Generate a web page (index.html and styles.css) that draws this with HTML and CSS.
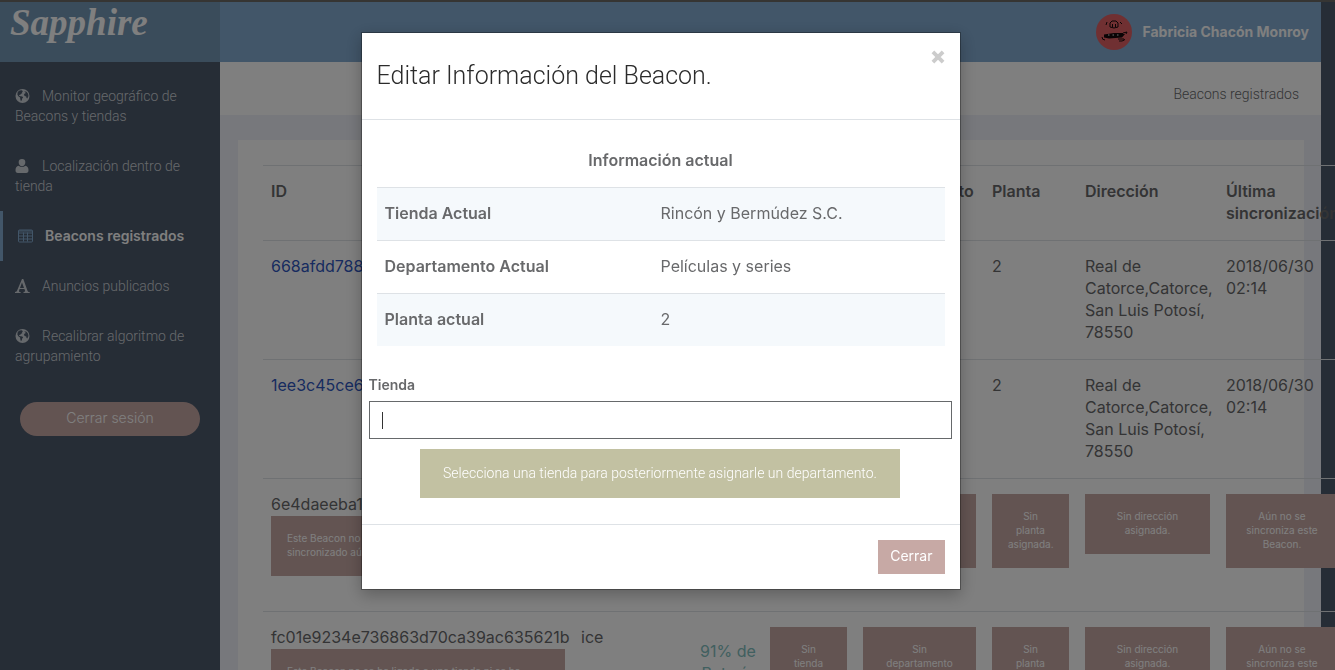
FILE: index.html
```html
<!DOCTYPE html>
<html lang="es">
<head>
<meta charset="utf-8">
<meta name="viewport" content="width=device-width, initial-scale=1">
<title>Sapphire - Beacons registrados</title>
<link rel="stylesheet" href="styles.css">
</head>
<body>
<svg class="sprite" aria-hidden="true">
  <symbol id="globe" viewBox="0 0 14 14"><circle cx="7" cy="7" r="7" fill="currentColor"/><path class="land" d="M2.200 3 4 1.600 6.200 1.300 7.500 2.200 6.300 3.300 7 4 5.300 5 4.600 6 3.800 5.700 3.500 6.800 5 7.200 6.800 7.400 7.600 8.600 6.700 9.600 6.300 11.300 5.400 12.200 4.800 10.200 4.600 8.400 2.800 7.200 1.900 5.400zM8.800 2.200 11 2.700 12.600 4.700 13 7 11.800 9.600 11 9 10.700 7.400 9.200 7 8.400 5.700 9.200 4.600 10.500 4 9.600 3.200z"/></symbol>
  <symbol id="user" viewBox="0 0 14 14"><path fill="currentColor" d="M6.500 0a3.300 3.300 0 0 1 3.300 3.500c0 2-1.400 3.700-3.300 3.700s-3.300-1.700-3.300-3.700A3.300 3.300 0 0 1 6.500 0zM3.200 6.700a4.600 4.600 0 0 0 6.600 0C12 7 13 8.800 13 11.300c0 1.700-.8 2.700-2.300 2.700H2.300C.8 14 0 13 0 11.300c0-2.500 1-4.300 3.200-4.600z"/></symbol>
  <symbol id="grid" viewBox="0 0 15 13"><path fill="none" stroke="currentColor" d="M1.500.5h12a1 1 0 0 1 1 1v10a1 1 0 0 1-1 1h-12a1 1 0 0 1-1-1v-10a1 1 0 0 1 1-1zM.5 1.500h14M.5 3.500h14M.5 6.500h14M.5 9.500h14M5.500 3v9M9.500 3v9"/></symbol>
  <symbol id="type" viewBox="0 0 15 14"><path fill="currentColor" fill-rule="evenodd" d="M7 0h1.300l4.200 11.700c.3.900.8 1.200 2.200 1.300v1H8.500v-1c1.600-.1 1.800-.5 1.500-1.400L9.400 10H4.600l-.5 1.400c-.3 1 .1 1.500 1.500 1.600v1H0v-1c1.200-.1 1.700-.5 2.100-1.500zM7 3.400 5 8.900h4z"/></symbol>
</svg>
<div class="page">
  <aside class="sidebar">
    <a class="logo" href="#">Sapphire</a>
    <nav class="nav">
      <a href="#"><svg class="icon"><use href="#globe"/></svg>Monitor geográfico de Beacons y tiendas</a>
      <a href="#"><svg class="icon"><use href="#user"/></svg>Localización dentro de tienda</a>
      <a class="active" href="#"><svg class="icon"><use href="#grid"/></svg>Beacons registrados</a>
      <a href="#"><svg class="icon"><use href="#type"/></svg>Anuncios publicados</a>
      <a href="#"><svg class="icon"><use href="#globe"/></svg>Recalibrar algoritmo de agrupamiento</a>
    </nav>
    <button class="logout" type="button">Cerrar sesión</button>
  </aside>
  <div class="main">
    <header class="topbar">
      <svg class="avatar" viewBox="0 0 36 36" aria-hidden="true"><circle cx="18" cy="18" r="18" fill="#e06065"/><g fill="none" stroke="#15080a"><path d="M14 13V9l2-2h4l2 2v4q-4 2-8 0M16.500 10v3M19.500 10v3M11 8l-1 3M24 8l2 2"/><path d="M6 23q0 3 3 3M22 25h6q2 1-2 2h-3M27 19l4-1-1 2"/></g><path d="M8 20.500 18 19h9v1h2l-3 3.500-13 1-5-1z" fill="#15080a"/><path d="M12 21h1.500m3 0H18m3 0h1.500" stroke="#ddd"/></svg>
      <span>Fabricia Chacón Monroy</span>
    </header>
    <div class="crumbs">Beacons registrados</div>
    <section class="card">
      <table class="beacons">
        <colgroup><col class="w-id"><col class="w-name"><col class="w-bat"><col class="w-small"><col class="w-dep"><col class="w-small"><col class="w-dir"><col class="w-sync"></colgroup>
        <thead><tr><th>ID</th><th>Nombre</th><th>Batería</th><th>Tienda</th><th>Departamento</th><th>Planta</th><th>Dirección</th><th>Última sincronización</th></tr></thead>
        <tbody>
          <tr><td><a href="#">668afdd788</a></td><td>mint</td><td></td><td></td><td></td><td>2</td><td>Real de Catorce,Catorce, San Luis Potosí, 78550</td><td>2018/06/30 02:14</td></tr>
          <tr><td><a href="#">1ee3c45ce6</a></td><td>mint</td><td></td><td></td><td></td><td>2</td><td>Real de Catorce,Catorce, San Luis Potosí, 78550</td><td>2018/06/30 02:14</td></tr>
          <tr><td>6e4daeeba1f<div class="note left">Este Beacon no se ha ligado a una tienda ni se ha sincronizado aún.</div></td><td></td><td></td><td></td><td><div class="note">Sin departamento asignado.</div></td><td><div class="note">Sin planta asignada.</div></td><td><div class="note">Sin dirección asignada.</div></td><td><div class="note">Aún no se sincroniza este Beacon.</div></td></tr>
          <tr><td>fc01e9234e736863d70ca39ac635621b<div class="note left">Este Beacon no se ha ligado a una tienda ni se ha sincronizado aún.</div></td><td>ice</td><td class="level"><div class="battery">91% de Batería</div></td><td><div class="note">Sin tienda asignada.</div></td><td><div class="note">Sin departamento asignado.</div></td><td><div class="note">Sin planta asignada.</div></td><td><div class="note">Sin dirección asignada.</div></td><td><div class="note">Aún no se sincroniza este Beacon.</div></td></tr>
        </tbody>
      </table>
    </section>
  </div>
</div>
<div class="backdrop">
  <div class="modal" role="dialog" aria-modal="true" aria-labelledby="title">
    <div class="modal-head">
      <h4 id="title">Editar Información del Beacon.</h4>
      <button class="close" type="button" aria-label="Cerrar ventana"><svg viewBox="0 0 11 11"><path d="m1.500 1.500 8 8M9.500 1.500l-8 8" stroke="currentColor" stroke-width="3"/></svg></button>
    </div>
    <div class="modal-body">
      <table class="info">
        <colgroup><col class="w-key"><col></colgroup>
        <thead><tr><th colspan="2">Información actual</th></tr></thead>
        <tbody>
          <tr><th>Tienda Actual</th><td>Rincón y Bermúdez S.C.</td></tr>
          <tr><th>Departamento Actual</th><td>Películas y series</td></tr>
          <tr><th>Planta actual</th><td>2</td></tr>
        </tbody>
      </table>
      <div class="field">
        <label for="store">Tienda</label>
        <div class="entry"><input id="store" type="text" autocomplete="off"></div>
      </div>
      <p class="hint">Selecciona una tienda para posteriormente asignarle un departamento.</p>
    </div>
    <div class="modal-foot"><button class="dismiss" type="button">Cerrar</button></div>
  </div>
</div>
</body>
</html>
```
FILE: styles.css
```css
* { box-sizing: border-box; }
body {
  margin: 0;
  height: 100vh;
  overflow: hidden;
  border-top: 2px solid #6c6a66;
  background: #4c5a6c;
  color: #68696b;
  font: 16px/22px Inter, sans-serif;
}
button, input { font: inherit; }
a { text-decoration: none; }
.sprite { position: absolute; width: 0; height: 0; }
.land { fill: #4c5a6c; }

.page { display: flex; margin-right: 14px; height: 100%; }
.sidebar { flex: 0 0 220px; background: #4c5a6c; font: 300 14px/20px Roboto, sans-serif; }
.logo {
  display: block;
  height: 60px;
  padding-left: 10px;
  background: #7498b6;
  color: #fff;
  font: italic bold 37px/42px "Liberation Serif", serif;
}
.nav { padding-top: 9px; }
.nav a { display: block; padding: 15px; color: #cdd2d8; }
.nav a.active {
  border-left: 3px solid #84acd2;
  color: #fff;
  font-family: Inter, sans-serif;
  font-weight: 600;
}
.icon { width: 15px; height: 14px; margin-right: 12px; vertical-align: -2px; }
.active .icon { color: #84acd2; }
.logout {
  display: block;
  width: 180px;
  height: 34px;
  margin: 21px 20px;
  padding: 0 0 2px;
  border: 0;
  border-radius: 17px;
  background: #c7a9a5;
  color: #fff;
  font: 300 14px/20px Inter, sans-serif;
}
.main { flex: 1; min-width: 0; background: #eff1f8; }
.topbar {
  display: flex;
  align-items: center;
  justify-content: flex-end;
  gap: 10px;
  height: 60px;
  padding-right: 12px;
  background: #84acd2;
  color: #fff;
  font: bold 14px/20px Inter, sans-serif;
}
.avatar { width: 36px; height: 36px; }
.crumbs {
  height: 53px;
  padding: 22px 22px 0;
  background: #fff;
  text-align: right;
  font: 300 14px/20px Roboto, sans-serif;
}
.card { margin: 25px 17px 0 18px; padding: 25px; background: #fff; }

table { border-collapse: separate; border-spacing: 0; table-layout: fixed; }
th, td { border-top: 1px solid #dee2e6; text-align: left; vertical-align: top; padding: 14px 8px 16px; }
th { font-weight: 600; }
td { font-weight: 400; }
.beacons { width: 1083px; }
.beacons a { color: #2f57c0; }
.beacons .level { padding: 14px 4px; }
.w-id { width: 310px; }
.w-name { width: 121px; }
.w-bat { width: 68px; }
.w-small { width: 93px; }
.w-dep { width: 129px; }
.w-dir { width: 141px; }
.w-sync { width: 128px; }
.note {
  margin: 1px 0 19px;
  padding: 15px 16px 17px;
  background: #c7a9a5;
  color: #fff;
  font-size: 10px;
  line-height: 14px;
  text-align: center;
}
.note.left { text-align: left; }
.battery { margin-top: 14px; color: #82c0c0; text-align: center; }

.backdrop { position: fixed; inset: 0; padding: 32px 14px 30px 0; background: rgba(0, 0, 0, .5); }
.modal {
  width: 600px;
  max-width: 100%;
  margin: 0 auto;
  border: 1px solid rgba(0, 0, 0, .3);
  background: #fff;
  background-clip: padding-box;
  box-shadow: 0 5px 15px rgba(0, 0, 0, .25);
}
.modal-head {
  display: flex;
  justify-content: space-between;
  align-items: flex-start;
  padding: 15px;
  height: 87px;
  border-bottom: 1px solid #dee2e6;
}
h4 { margin: 10px 0; font: 300 25px/36px Roboto, sans-serif; color: #2b2b2b; }
.close { display: flex; margin: 2px 0; padding: 0; border: 0; background: none; color: #ccc; }
.close svg { width: 14px; height: 14px; }
.modal-body { padding: 15px 8px 26px 7px; }
.info { width: calc(100% - 15px); margin: 0 7px 0 8px; }
.info thead th { border: 0; text-align: center; padding: 14px 8px 16px; }
.w-key { width: 276px; }
.info tbody tr:nth-child(odd) { background: #f5f9fc; }
.field { padding-top: 28px; }
.field label { display: block; margin-bottom: 5px; font: 600 14px/22px Inter, sans-serif; }
.entry { position: relative; }
.entry::before { content: ""; position: absolute; left: 13px; top: 11px; width: 1px; height: 17px; background: #333; }
.entry input {
  display: block;
  width: 100%;
  height: 38px;
  padding: 0 12px;
  border: 1px solid #66696b;
  border-radius: 0;
  outline: 0;
}
.hint {
  width: fit-content;
  margin: 10px auto 0;
  padding: 14px 23px 15px;
  background: #c2c1a2;
  color: #fff;
  font: 300 14px/20px Roboto, sans-serif;
}
.modal-foot { display: flex; justify-content: flex-end; padding: 15px; border-top: 1px solid #dee2e6; }
.dismiss { height: 34px; padding: 0 12px 2px; border: 0; background: #c7a9a5; color: #fff; font: 14px/20px Inter, sans-serif; }
```
